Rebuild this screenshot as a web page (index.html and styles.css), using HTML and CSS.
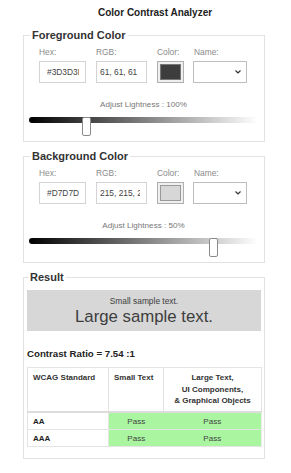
FILE: index.html
```html
<!DOCTYPE html>
<html lang="en">
<head>
<meta charset="UTF-8">
<meta name="viewport" content="width=device-width, initial-scale=1.0">
<title>Color Contrast Analyzer</title>
<link rel="stylesheet" href="styles.css">
</head>
<body>
<div class="app">
    <h1 class="title">Color Contrast Analyzer</h1>

    <fieldset class="panel">
        <legend>Foreground Color</legend>
        <div class="fields">
            <div class="field">
                <label>Hex:</label>
                <input type="text" class="input input-hex" value="#3D3D3D">
            </div>
            <div class="field">
                <label>RGB:</label>
                <input type="text" class="input input-rgb" value="61, 61, 61">
            </div>
            <div class="field">
                <label>Color:</label>
                <div class="swatch"><div class="swatch-fill fill-dark"></div></div>
            </div>
            <div class="field">
                <label>Name:</label>
                <div class="select">
                    <svg width="6" height="4" viewBox="0 0 6 4"><path d="M0.5 0.5 L3 3 L5.5 0.5" fill="none" stroke="#333" stroke-width="1.2"/></svg>
                </div>
            </div>
        </div>
        <div class="lightness">Adjust Lightness : 100%</div>
        <div class="slider">
            <div class="track"></div>
            <div class="thumb" style="left: 23.3%"></div>
        </div>
    </fieldset>

    <fieldset class="panel">
        <legend>Background Color</legend>
        <div class="fields">
            <div class="field">
                <label>Hex:</label>
                <input type="text" class="input input-hex" value="#D7D7D7">
            </div>
            <div class="field">
                <label>RGB:</label>
                <input type="text" class="input input-rgb" value="215, 215, 215">
            </div>
            <div class="field">
                <label>Color:</label>
                <div class="swatch"><div class="swatch-fill fill-light"></div></div>
            </div>
            <div class="field">
                <label>Name:</label>
                <div class="select">
                    <svg width="6" height="4" viewBox="0 0 6 4"><path d="M0.5 0.5 L3 3 L5.5 0.5" fill="none" stroke="#333" stroke-width="1.2"/></svg>
                </div>
            </div>
        </div>
        <div class="lightness">Adjust Lightness : 50%</div>
        <div class="slider">
            <div class="track"></div>
            <div class="thumb" style="left: 78.5%"></div>
        </div>
    </fieldset>

    <fieldset class="panel result">
        <legend>Result</legend>
        <div class="sample">
            <div class="sample-small">Small sample text.</div>
            <div class="sample-large">Large sample text.</div>
        </div>
        <div class="ratio">Contrast Ratio = 7.54 :1</div>
        <table class="wcag">
            <colgroup>
                <col class="col-std">
                <col class="col-small">
                <col class="col-large">
            </colgroup>
            <tr>
                <th>WCAG Standard</th>
                <th>Small Text</th>
                <th class="center">Large Text,<br>UI Components,<br>&amp; Graphical Objects</th>
            </tr>
            <tr>
                <td class="level">AA</td>
                <td class="pass">Pass</td>
                <td class="pass">Pass</td>
            </tr>
            <tr>
                <td class="level">AAA</td>
                <td class="pass">Pass</td>
                <td class="pass">Pass</td>
            </tr>
        </table>
    </fieldset>
</div>
</body>
</html>
```

FILE: styles.css
```css
body {
    font-family: "Liberation Sans", Arial, sans-serif;
    background-color: #fff;
    color: #333;
    margin: 0;
    padding: 0;
}

.app {
    width: 242px;
    padding: 7px 0 0 23px;
}

.title {
    margin: 0 0 10px 0;
    padding-left: 75px;
    font-size: 10px;
    line-height: 12px;
    font-weight: bold;
    color: #222;
}

.panel {
    border: 1px solid #e2e2e2;
    margin: 0 0 8px 0;
    padding: 5px 6px 5px 5px;
    min-width: 0;
}

.panel legend {
    font-size: 11px;
    line-height: 13px;
    font-weight: bold;
    color: #333;
    padding: 0 2px;
    margin-left: 1px;
}

.fields {
    display: flex;
    gap: 10px;
    padding-left: 10px;
}

.field {
    display: flex;
    flex-direction: column;
}

.field label {
    font-size: 8.4px;
    line-height: 10px;
    color: #8a8a8a;
    margin-bottom: 4px;
}

.input {
    box-sizing: border-box;
    height: 22px;
    border: 1px solid #d4d4d4;
    font-family: "Liberation Sans", Arial, sans-serif;
    font-size: 8.4px;
    color: #444;
    margin: 0;
    outline: none;
}

.input-hex {
    width: 47px;
    padding: 0 6px 0 7px;
}

.input-rgb {
    width: 51px;
    padding: 0 6px 0 3px;
}

.swatch {
    box-sizing: border-box;
    width: 27px;
    height: 22px;
    border: 1px solid #b0b0b0;
    background-color: #efefef;
    padding: 2px;
}

.swatch-fill {
    height: 100%;
    box-sizing: border-box;
    border: 1px solid #777;
}

.fill-dark {
    background-color: #3d3d3d;
}

.fill-light {
    background-color: #d7d7d7;
    border-color: #999;
}

.select {
    box-sizing: border-box;
    width: 54px;
    height: 22px;
    margin-left: -1px;
    border: 1px solid #bdbdbd;
    background-color: #fff;
    display: flex;
    align-items: center;
    justify-content: flex-end;
    padding-right: 5px;
}

.lightness {
    margin-top: 17px;
    text-align: center;
    font-size: 8.1px;
    line-height: 10px;
    color: #777;
}

.slider {
    position: relative;
    height: 19px;
    margin: 7px 0 0 0;
}

.track {
    height: 6px;
    margin-top: 7px;
    border-radius: 3px;
    background: linear-gradient(to right, #000, #fff);
}

.thumb {
    position: absolute;
    top: 0;
    box-sizing: border-box;
    width: 9px;
    height: 19px;
    background-color: #fff;
    border: 1px solid #8a8a8a;
    border-radius: 2px;
}

.result {
    padding: 6px 3px 11px 3px;
}

.sample {
    background-color: #d7d7d7;
    color: #3d3d3d;
    text-align: center;
    padding: 6px 0 4px;
}

.sample-small {
    font-size: 8.4px;
    line-height: 11px;
}

.sample-large {
    font-size: 16.8px;
    line-height: 20px;
}

.ratio {
    margin: 17px 0 7px 0;
    font-size: 9.7px;
    line-height: 12px;
    font-weight: bold;
    color: #222;
}

.wcag {
    width: 234px;
    table-layout: fixed;
    border-collapse: collapse;
    border: 1px solid #ececec;
    font-size: 8px;
}

.col-std {
    width: 81px;
}

.col-small {
    width: 55px;
}

.col-large {
    width: 98px;
}

.wcag th {
    text-align: left;
    vertical-align: top;
    font-weight: bold;
    color: #333;
    line-height: 11.6px;
    padding: 4px 5px 4px 5px;
    border: 1px solid #e4e4e4;
    border-bottom: 2px solid #dcdcdc;
}

.wcag th.center {
    text-align: center;
}

.wcag td {
    line-height: 11px;
    padding: 3px 5px 2px 5px;
    border: 1px solid #e4e4e4;
}

.wcag td.level {
    font-weight: bold;
    color: #222;
}

.wcag td.pass {
    background-color: #a9f5a0;
    color: #444;
    text-align: center;
    border-left: none;
    border-right: none;
}

.wcag tr td.pass:nth-child(2) {
    border-left: 1px solid #c4c4c4;
}
```
